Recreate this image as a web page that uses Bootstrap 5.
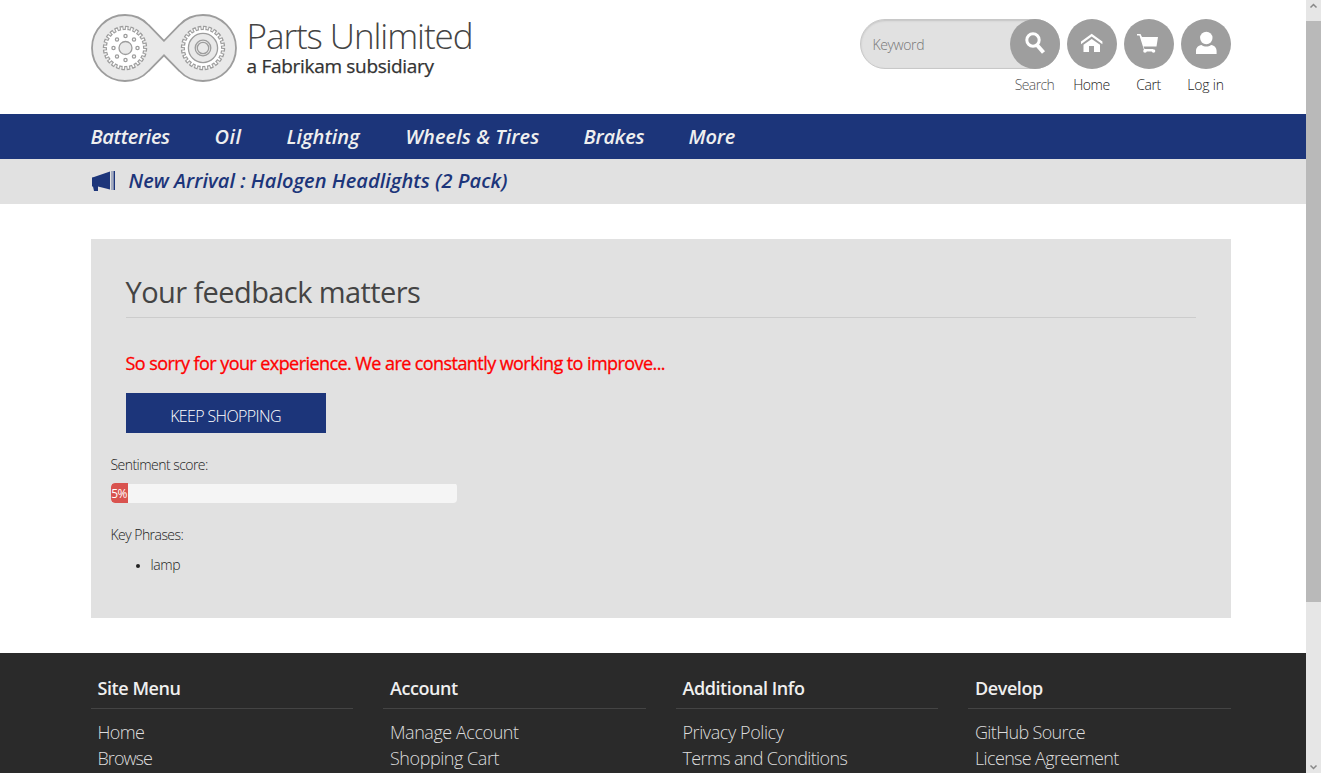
<!DOCTYPE html>
<html lang="en">
<head>
<meta charset="utf-8">
<meta name="viewport" content="width=device-width, initial-scale=1">
<title>Parts Unlimited</title>
<link href="https://cdn.jsdelivr.net/npm/bootstrap@5.3.0/dist/css/bootstrap.min.css" rel="stylesheet">
<style>
html,body{height:100%;overflow:hidden}
body{font-family:"Open Sans","Noto Sans",sans-serif;font-size:14px;font-weight:300;color:#222;line-height:20px}
a{color:inherit;text-decoration:none}
.page-width{width:1140px;margin:0 auto}
.site-header{height:114px}
.brand-logo{margin-top:14px}
.brand-text{margin:15px 0 0 10px}
.brand-title{font-size:35px;line-height:42px;letter-spacing:-1.07px;color:#444;white-space:nowrap}
.brand-sub{font-size:19px;line-height:20px;margin-top:-1px;font-weight:400;letter-spacing:-.3px;color:#333;white-space:nowrap;-webkit-text-stroke:.25px #333}
.tools{margin-top:19px;gap:7px}
.search-box{width:200px;height:50px;border-radius:25px;background:#e1e1e1;border:1px solid #c8c8c8;box-shadow:inset 0 1px 2px #c4c4c4;color:#777;padding-left:12px}
.keyword{letter-spacing:-.4px;padding-top:2px}
.round-btn{width:50px;height:50px;border-radius:50%;background:#9e9e9e}
.tool{width:50px}
.tool-label{line-height:20px;margin-top:6px;white-space:nowrap;letter-spacing:-.4px}
.search-label{width:50px;color:#555;letter-spacing:-.6px}
.navy-bar{height:45px;background:#1c357a;color:#efefef}
.nav-text{font-size:20px;font-weight:600;font-style:italic;line-height:45px;white-space:nowrap}
.nav-gap{gap:45px}
.news-bar{height:45px;background:#e1e1e1;color:#1c357a}
.news-link{margin-left:14px;letter-spacing:.05px;line-height:44px}
.panel-box{height:379px;margin-top:35px;margin-bottom:35px;background:#e1e1e1}
.panel-title{font-size:29px;font-weight:400;line-height:36px;color:#444;padding:35px 0 7px;margin:0 35px;border-bottom:1px solid #ccc;letter-spacing:-.58px}
.sorry{font-size:18px;font-weight:400;color:red;line-height:24px;margin:33px 35px 18px;letter-spacing:-.57px;-webkit-text-stroke:.3px red}
.shop-btn{width:200px;height:40px;margin-left:35px;background:#1c357a;color:#fff;border-radius:0;font-size:16px;font-weight:300;padding:5px 0 0;letter-spacing:-.62px}
.feedback-info{margin:22px 0 0 20px;letter-spacing:-.54px}
.score-track{width:346px;height:20px;margin-top:8px;border-radius:4px;background:linear-gradient(#e1e1e1 1px,#f5f5f5 1px)}
.score-fill{background:#d9534f;font-size:12px;font-weight:400;border-radius:4px 0 0 4px;color:#fff;padding-top:1px}
.phrases{margin-top:10px;padding-left:40px}
.phrases li{letter-spacing:-.4px}
.phrases li::marker{font-size:11px}
.site-footer{height:120px;background:#2a2a2a;color:#ddd;font-size:18px;line-height:26px}
.foot-grid{grid-template-columns:repeat(4,1fr);gap:30px}
.foot-title{font-size:18px;font-weight:600;color:#efefef;line-height:24px;padding:23px 0 8px 7px;border-bottom:1px solid #444;margin-bottom:10px;letter-spacing:-.43px}
.foot-links{padding-left:7px;letter-spacing:-.65px}
.foot-links.wide{letter-spacing:-.45px}
.scroll-rail{width:15px;background:#e6e6e6}
.scroll-thumb{height:581px;background:#b9b9b9}
</style>
</head>
<body class="bg-white">
<header class="site-header">
 <div class="page-width d-flex justify-content-between">
  <a href="#" class="d-flex">
   <svg class="brand-logo" width="146" height="68" viewBox="0 0 146 68" fill="none" stroke="#9d9d9d">
    <path d="M73 26.800 57.500 11C52 5 43 1 34 1a33 33 0 0 0 0 66c9 0 18-4 23.500-10L73 41.300 88.500 57c5.500 6 14.500 10 23.500 10a33 33 0 0 0 0-66c-9 0-18 4-23.500 10Z" fill="#e9e9e9" stroke-width="1.800"/>
    <g id="gear">
     <circle cx="34" cy="34" r="20" stroke-width="4.400" pathLength="96" stroke-dasharray="2.700 1.300"/>
     <circle cx="34" cy="34" r="18.700" fill="#fff" stroke-width="1.200"/>
     <circle cx="34" cy="34" r="19" stroke="#fff" stroke-width="3.800" pathLength="96" stroke-dasharray="1.300 2.700" stroke-dashoffset="-.7"/>
    </g>
    <use href="#gear" x="78"/>
    <g stroke-width="1.300"><circle cx="34.500" cy="34" r="6.500" fill="#e9e9e9"/>
    <circle cx="34.500" cy="22" r="1.600"/><circle cx="43" cy="25.500" r="1.600"/><circle cx="46.500" cy="34" r="1.600"/><circle cx="43" cy="42.500" r="1.600"/><circle cx="34.500" cy="46" r="1.600"/><circle cx="26" cy="42.500" r="1.600"/><circle cx="22.500" cy="34" r="1.600"/><circle cx="26" cy="25.500" r="1.600"/></g>
    <circle cx="112" cy="34" r="14.600" fill="#e9e9e9" stroke-width="1.300"/><circle cx="112" cy="34" r="7.800" stroke-width="1.300"/><circle cx="112" cy="34" r="5.700" stroke-width="1.300"/>
   </svg>
   <div class="brand-text"><div class="brand-title">Parts Unlimited</div><div class="brand-sub">a Fabrikam subsidiary</div></div>
  </a>
  <div class="d-flex tools">
   <div>
    <div class="search-box d-flex align-items-center justify-content-between"><span class="keyword">Keyword</span>
     <a href="#" class="round-btn d-flex align-items-center justify-content-center flex-shrink-0" style="margin-right:-1px"><svg width="24" height="24" fill="none" stroke="#fff"><circle cx="10" cy="8" r="6.200" stroke-width="3"/><path d="m14 13 6.500 7.500" stroke-width="4"/></svg></a></div>
    <div class="tool-label search-label ms-auto text-center">Search</div>
   </div>
   <a href="#" class="tool text-center"><div class="round-btn"><svg class="d-block" width="50" height="50" fill="#fff"><path d="m14 22.500 10.700-7.800 10.700 7.800v2.700l-10.700-7.700-10.700 7.700z"/><path d="m16.500 25.700 8.200-5.700 8.300 5.700v7.300h-6v-6h-5v6h-5.500z"/></svg></div><div class="tool-label">Home</div></a>
   <a href="#" class="tool text-center"><div class="round-btn"><svg class="d-block" width="50" height="50" fill="#fff"><path d="M13 15h3.500l1.500 3h16l-1.500 9.500H19.500l1 2.500H29v1H20L15.500 16.500H13z"/><circle cx="21" cy="32" r="1.800"/><circle cx="29.500" cy="32" r="1.800"/><path d="M21 31h8v1.500h-8z"/></svg></div><div class="tool-label">Cart</div></a>
   <a href="#" class="tool text-center"><div class="round-btn"><svg class="d-block" width="50" height="50" fill="#fff"><circle cx="25.300" cy="19" r="6.200"/><path d="M15 35v-3c0-3 2-5.500 5.500-6 3 2 6.600 2 9.600 0 3.500.5 5.500 3 5.500 6v3z"/></svg></div><div class="tool-label" style="letter-spacing:-.2px">Log in</div></a>
  </div>
 </div>
</header>
<nav class="navy-bar">
 <div class="page-width d-flex nav-text nav-gap">
  <a href="#" style="width:79px;letter-spacing:-.35px">Batteries</a><a href="#" style="width:27px;letter-spacing:.5px">Oil</a><a href="#" style="width:74px">Lighting</a><a href="#" style="width:133px;letter-spacing:.08px">Wheels &amp; Tires</a><a href="#" style="width:60px;letter-spacing:-.2px">Brakes</a><a href="#" style="letter-spacing:-.2px">More</a>
 </div>
</nav>
<div class="news-bar">
 <div class="page-width d-flex nav-text">
  <svg width="24" height="45" fill="#1c357a" class="flex-shrink-0"><path d="M1 18.500 3 18l16-5.500v18L7 27.500v4.500H3l-1-4.500H1zM22.500 12H24v19h-1.500z"/><path d="M20.500 12h1v19h-1z" opacity=".6"/></svg>
  <a href="#" class="news-link">New Arrival : Halogen Headlights (2 Pack)</a>
 </div>
</div>
<main class="page-width panel-box overflow-hidden">
 <h1 class="panel-title">Your feedback matters</h1>
 <p class="sorry">So sorry for your experience. We are constantly working to improve...</p>
 <a href="#" class="btn shop-btn d-flex align-items-center justify-content-center">KEEP SHOPPING</a>
 <section class="feedback-info">
  <div>Sentiment score:</div>
  <div class="progress score-track"><div class="progress-bar score-fill" style="width:5%">5%</div></div>
  <div style="margin-top:22px">Key Phrases:</div>
  <ul class="mb-0 phrases"><li>lamp</li></ul>
 </section>
</main>
<footer class="site-footer overflow-hidden">
 <div class="page-width d-grid foot-grid">
  <div><h2 class="foot-title">Site Menu</h2><div class="foot-links">Home<br><span style="letter-spacing:-.95px">Browse</span></div></div>
  <div><h2 class="foot-title">Account</h2><div class="foot-links wide">Manage Account<br>Shopping Cart</div></div>
  <div><h2 class="foot-title">Additional Info</h2><div class="foot-links"><span style="letter-spacing:-.42px">Privacy Policy</span><br>Terms and Conditions</div></div>
  <div><h2 class="foot-title">Develop</h2><div class="foot-links">GitHub Source<br>License Agreement</div></div>
 </div>
</footer>
<div class="scroll-rail position-fixed top-0 end-0 h-100 d-flex flex-column">
 <svg width="15" height="21" fill="none" stroke="#888" stroke-width="1.500"><path d="m4.500 7.500 3-3 3 3"/></svg>
 <div class="scroll-thumb"></div>
 <svg class="mt-auto" width="15" height="15" fill="none" stroke="#888" stroke-width="1.500"><path d="m4.500 7.500 3 3 3-3"/></svg>
</div>
<script src="https://cdn.jsdelivr.net/npm/bootstrap@5.3.0/dist/js/bootstrap.bundle.min.js"></script>
</body>
</html>
